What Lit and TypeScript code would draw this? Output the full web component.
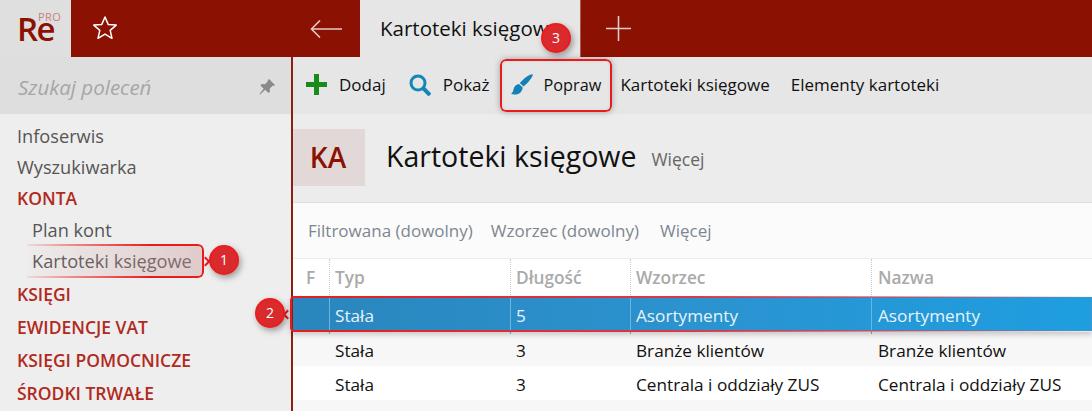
import { LitElement, html, css } from "lit";
import { customElement } from "lit/decorators.js";

const COLS = ["F", "Typ", "Długość", "Wzorzec", "Nazwa"];
const ROWS = [
  ["", "Stała", "5", "Asortymenty", "Asortymenty"],
  ["", "Stała", "3", "Branże klientów", "Branże klientów"],
  ["", "Stała", "3", "Centrala i oddziały ZUS", "Centrala i oddziały ZUS"],
];

@customElement("app-root")
export class AppRoot extends LitElement {
  static styles = css`
    :host {
      display: block;
      position: relative;
      width: 1092px;
      height: 411px;
      overflow: hidden;
      font-family: "Open Sans", "Noto Sans", sans-serif;
      font-size: 17px;
      color: #111;
      background: #f7f7f7;
    }
    .top {
      display: flex;
      height: 57px;
      background: #8b1103;
    }
    .logo {
      position: relative;
      width: 71px;
      background: #dfdfdf;
      padding: 9px 0 0 17px;
      box-sizing: border-box;
      color: #8b1103;
      font-size: 33px;
      font-weight: 600;
      line-height: 40px;
      letter-spacing: -1.5px;
    }
    .logo span {
      position: absolute;
      left: 38px;
      top: 12px;
      font-size: 11px;
      font-weight: 400;
      line-height: 10px;
      letter-spacing: 0.4px;
      color: #c5837c;
    }
    .star {
      width: 221px;
      padding: 15px 0 0 21px;
      box-sizing: border-box;
    }
    .back {
      width: 68px;
      display: flex;
      align-items: center;
      justify-content: center;
    }
    .tab {
      width: 220px;
      background: #e6e6e6;
      font-size: 20.5px;
      line-height: 57px;
      padding-left: 20px;
      box-sizing: border-box;
      white-space: nowrap;
    }
    .plus {
      width: 76px;
      display: flex;
      align-items: center;
      justify-content: center;
      border-left: 1px solid #a85a50;
      box-sizing: border-box;
    }
    .main {
      display: grid;
      grid-template-columns: 291px 1fr;
      height: 354px;
    }
    .side {
      background: #eeeeee;
      border-right: 2px solid #8b2014;
      width: 293px;
      box-sizing: border-box;
    }
    .search {
      height: 57px;
      background: #dedede;
      display: flex;
      align-items: center;
      justify-content: space-between;
      padding: 3px 15px 0 18px;
      box-sizing: border-box;
      font-style: italic;
      font-size: 20.5px;
      color: #a6a6a6;
    }
    .nav {
      padding: 7px 0 0 17px;
      font-size: 18.2px;
      color: #555;
    }
    .nav div {
      height: 31px;
      line-height: 31px;
      white-space: nowrap;
    }
    .nav .sec {
      color: #b02a1d;
      font-weight: 600;
      font-size: 17.5px;
      height: 33px;
      line-height: 33px;
    }
    .nav .sec.first {
      height: 32px;
      line-height: 31px;
    }
    .nav .sub {
      padding-left: 15px;
    }
    .nav .sub.last {
      height: 32px;
      line-height: 30px;
    }
    .content {
      margin-left: 2px;
      min-width: 0;
    }
    .tools {
      height: 57px;
      background: #e6e6e6;
      display: flex;
      align-items: center;
      padding-bottom: 2px;
      box-sizing: border-box;
      white-space: nowrap;
    }
    .tool {
      display: flex;
      align-items: center;
    }
    .tool span {
      margin-left: 12px;
    }
    .tool span.tight {
      margin-left: 11px;
      font-size: 16.3px;
    }
    .head {
      height: 88px;
      background: #ececec;
      border-bottom: 1px solid #dcdcdc;
      display: flex;
      align-items: center;
    }
    .badge {
      width: 72px;
      height: 57px;
      margin-top: -1px;
      padding-right: 2px;
      box-sizing: border-box;
      background: #e3d8d8;
      color: #8b1103;
      font-size: 28px;
      font-weight: 600;
      line-height: 57px;
      text-align: center;
    }
    .title {
      font-size: 28.5px;
      margin-left: 21px;
      margin-top: -4px;
    }
    .more {
      font-size: 17.5px;
      color: #666;
      margin-left: 15px;
      margin-top: 2px;
    }
    .filters {
      height: 56px;
      background: #fbfbfb;
      border-bottom: 1px solid #ececec;
      box-sizing: border-box;
      display: flex;
      gap: 18px;
      align-items: center;
      padding-left: 15px;
      color: #7d8790;
    }
    .filters span:last-child {
      margin-left: 3px;
    }
    .row {
      display: grid;
      grid-template-columns: 36px 181px 120px 241px 1fr;
      height: 34px;
      line-height: 37px;
      font-size: 17.2px;
      background: #fff;
    }
    .row > div {
      padding-left: 5px;
      white-space: nowrap;
      border-left: 1px solid transparent;
    }
    .row > div:last-child {
      padding-left: 6px;
    }
    .row.hdr {
      height: 38px;
      line-height: 38px;
      color: #aaa;
      font-weight: 600;
      font-size: 17.3px;
    }
    .row.hdr > div + div {
      border-left: 1px dotted #ccc;
    }
    .row.hdr > div:first-child {
      padding-left: 12px;
    }
    .row.sel {
      background: linear-gradient(90deg, #2a86bd, #2b93cf 50%, #1e9ee0);
      color: #e8f3fa;
    }
    .row.sel > div + div {
      border-left: 1px solid #6db4dd;
    }
    .row.alt {
      background: #f7f7f7;
      height: 35px;
      line-height: 39px;
    }
    .call {
      position: absolute;
      box-sizing: border-box;
      pointer-events: none;
    }
    .call::before {
      content: "";
      position: absolute;
      inset: 0;
      padding: 2px;
      border-radius: inherit;
      background: var(--edge);
      -webkit-mask: linear-gradient(#000 0 0) content-box, linear-gradient(#000 0 0);
      -webkit-mask-composite: xor;
      mask-composite: exclude;
    }
    .c1 {
      --edge: linear-gradient(90deg, rgba(240, 140, 140, 0.15), #f08a8a 25%, #e81c1c 70%);
      left: 27px;
      top: 244px;
      width: 177px;
      height: 34px;
      border-radius: 0 6px 6px 0;
      background: linear-gradient(90deg, rgba(220, 190, 190, 0.05), rgba(205, 150, 150, 0.4));
    }
    .c1::before {
      padding-left: 0;
    }
    .c2 {
      --edge: linear-gradient(90deg, #e81c1c, #d83a4c 50%, rgba(230, 120, 120, 0.1) 100%);
      left: 290px;
      top: 296px;
      width: 802px;
      height: 36px;
      border-radius: 4px 0 0 4px;
      box-shadow: 0 3px 5px rgba(0, 0, 0, 0.18);
    }
    .c3 {
      --edge: #e81c1c;
      left: 500px;
      top: 59px;
      width: 112px;
      height: 53px;
      border-radius: 6px;
      box-shadow: 0 0 6px rgba(0, 0, 0, 0.3), inset 0 0 5px rgba(0, 0, 0, 0.15);
    }
    .dot {
      position: absolute;
      width: 30px;
      height: 30px;
      border-radius: 50%;
      background: #d92a2e;
      border: 2px solid #ee1c1c;
      box-sizing: border-box;
      color: #fff;
      text-align: center;
      font-size: 14px;
      line-height: 26px;
      box-shadow: 2px 3px 6px rgba(0, 0, 0, 0.35);
    }
    .tip {
      position: absolute;
      width: 5px;
      height: 5px;
      border-top: 2px solid #e81c1c;
      border-right: 2px solid #e81c1c;
      transform: rotate(45deg);
    }
    .tip.left {
      transform: rotate(-135deg);
    }
  `;

  render() {
    return html`
      <div class="top">
        <div class="logo">Re<span>PRO</span></div>
        <div class="star">
          <svg width="26" height="26" viewBox="0 0 26 26" fill="none" stroke="#fff" stroke-width="1.5" stroke-linejoin="round">
            <path d="M13 2l3.200 7.400 8 .7-6 5.300 1.800 7.900L13 19.100l-7 4.200 1.800-7.900-6-5.300 8-.7z" />
          </svg>
        </div>
        <div class="back">
          <svg width="32" height="18" viewBox="0 0 32 18" fill="none" stroke="#e6c9c5" stroke-width="1.6">
            <path d="M32 9H1M10 .5L1.500 9l8.500 8.500" />
          </svg>
        </div>
        <div class="tab">Kartoteki księgowe</div>
        <div class="plus">
          <svg width="25" height="25" viewBox="0 0 25 25" stroke="#e6c9c5" stroke-width="1.6">
            <path d="M12.500 0v25M0 12.500h25" />
          </svg>
        </div>
      </div>
      <div class="main">
        <div class="side">
          <div class="search">
            <span>Szukaj poleceń</span>
            <svg width="18" height="18" viewBox="0 0 18 18" fill="#8a8a8a">
              <path d="M11 1l6 6-1.200 1-1-.4-3 3 .1 3.200-1.400 1.200-3.300-3.300L2 16.500l-.6-.5 4.300-5.200-3.300-3.300L3.600 6l3.300.2 3-3-.3-1z" />
            </svg>
          </div>
          <div class="nav">
            <div>Infoserwis</div>
            <div>Wyszukiwarka</div>
            <div class="sec first">KONTA</div>
            <div class="sub">Plan kont</div>
            <div class="sub last">Kartoteki księgowe</div>
            <div class="sec">KSIĘGI</div>
            <div class="sec">EWIDENCJE VAT</div>
            <div class="sec">KSIĘGI POMOCNICZE</div>
            <div class="sec">ŚRODKI TRWAŁE</div>
          </div>
        </div>
        <div class="content">
          <div class="tools">
            <div class="tool" style="margin-left:13px">
              <svg width="21" height="21" viewBox="0 0 21 21" fill="#1a8a1a"><path d="M8 0h5v8h8v5h-8v8H8v-8H0V8h8z" /></svg>
              <span>Dodaj</span>
            </div>
            <div class="tool" style="margin-left:23px">
              <svg width="22" height="22" viewBox="0 0 22 22" fill="none" stroke="#1387b8" stroke-width="3"><circle cx="9" cy="9" r="7" /><path d="M14 14l7 7" stroke-width="4" /></svg>
              <span>Pokaż</span>
            </div>
            <div class="tool" style="margin-left:21px">
              <svg width="22" height="21" viewBox="0 0 22 21" fill="#1480b5">
                <path d="M21.500 .3C22 1 21.500 2.500 20 4.500 18 7.500 15 10.500 12.500 12.500L8.800 9C11.500 6 15.500 2.500 19 .8 20 .3 21 0 21.500 .3Z" />
                <path d="M8 10L11.700 13.500C11.500 17 9 20 5 20.500 3 20.800 1.200 20.500 0 19.800 1.500 19 2 17.500 2.500 15.500 3 12.500 5.500 10.200 8 10Z" />
              </svg>
              <span class="tight">Popraw</span>
            </div>
            <div class="tool" style="margin-left:19px">Kartoteki księgowe</div>
            <div class="tool" style="margin-left:21px">Elementy kartoteki</div>
          </div>
          <div class="head">
            <div class="badge">KA</div>
            <div class="title">Kartoteki księgowe</div>
            <div class="more">Więcej</div>
          </div>
          <div class="filters">
            <span>Filtrowana (dowolny)</span>
            <span>Wzorzec (dowolny)</span>
            <span>Więcej</span>
          </div>
          <div class="row hdr">${COLS.map((c) => html`<div>${c}</div>`)}</div>
          ${ROWS.map(
            (r, i) => html`<div class="row ${i === 0 ? "sel" : i === 1 ? "alt" : ""}">
              ${r.map((c) => html`<div>${c}</div>`)}
            </div>`
          )}
        </div>
      </div>
      <div class="call c1"></div>
      <div class="tip" style="left:202px;top:258px"></div>
      <div class="dot" style="left:209px;top:245px">1</div>
      <div class="call c2"></div>
      <div class="tip left" style="left:284px;top:311px"></div>
      <div class="dot" style="left:255px;top:298px">2</div>
      <div class="call c3"></div>
      <div class="dot" style="left:541px;top:23px">3</div>
    `;
  }
}
